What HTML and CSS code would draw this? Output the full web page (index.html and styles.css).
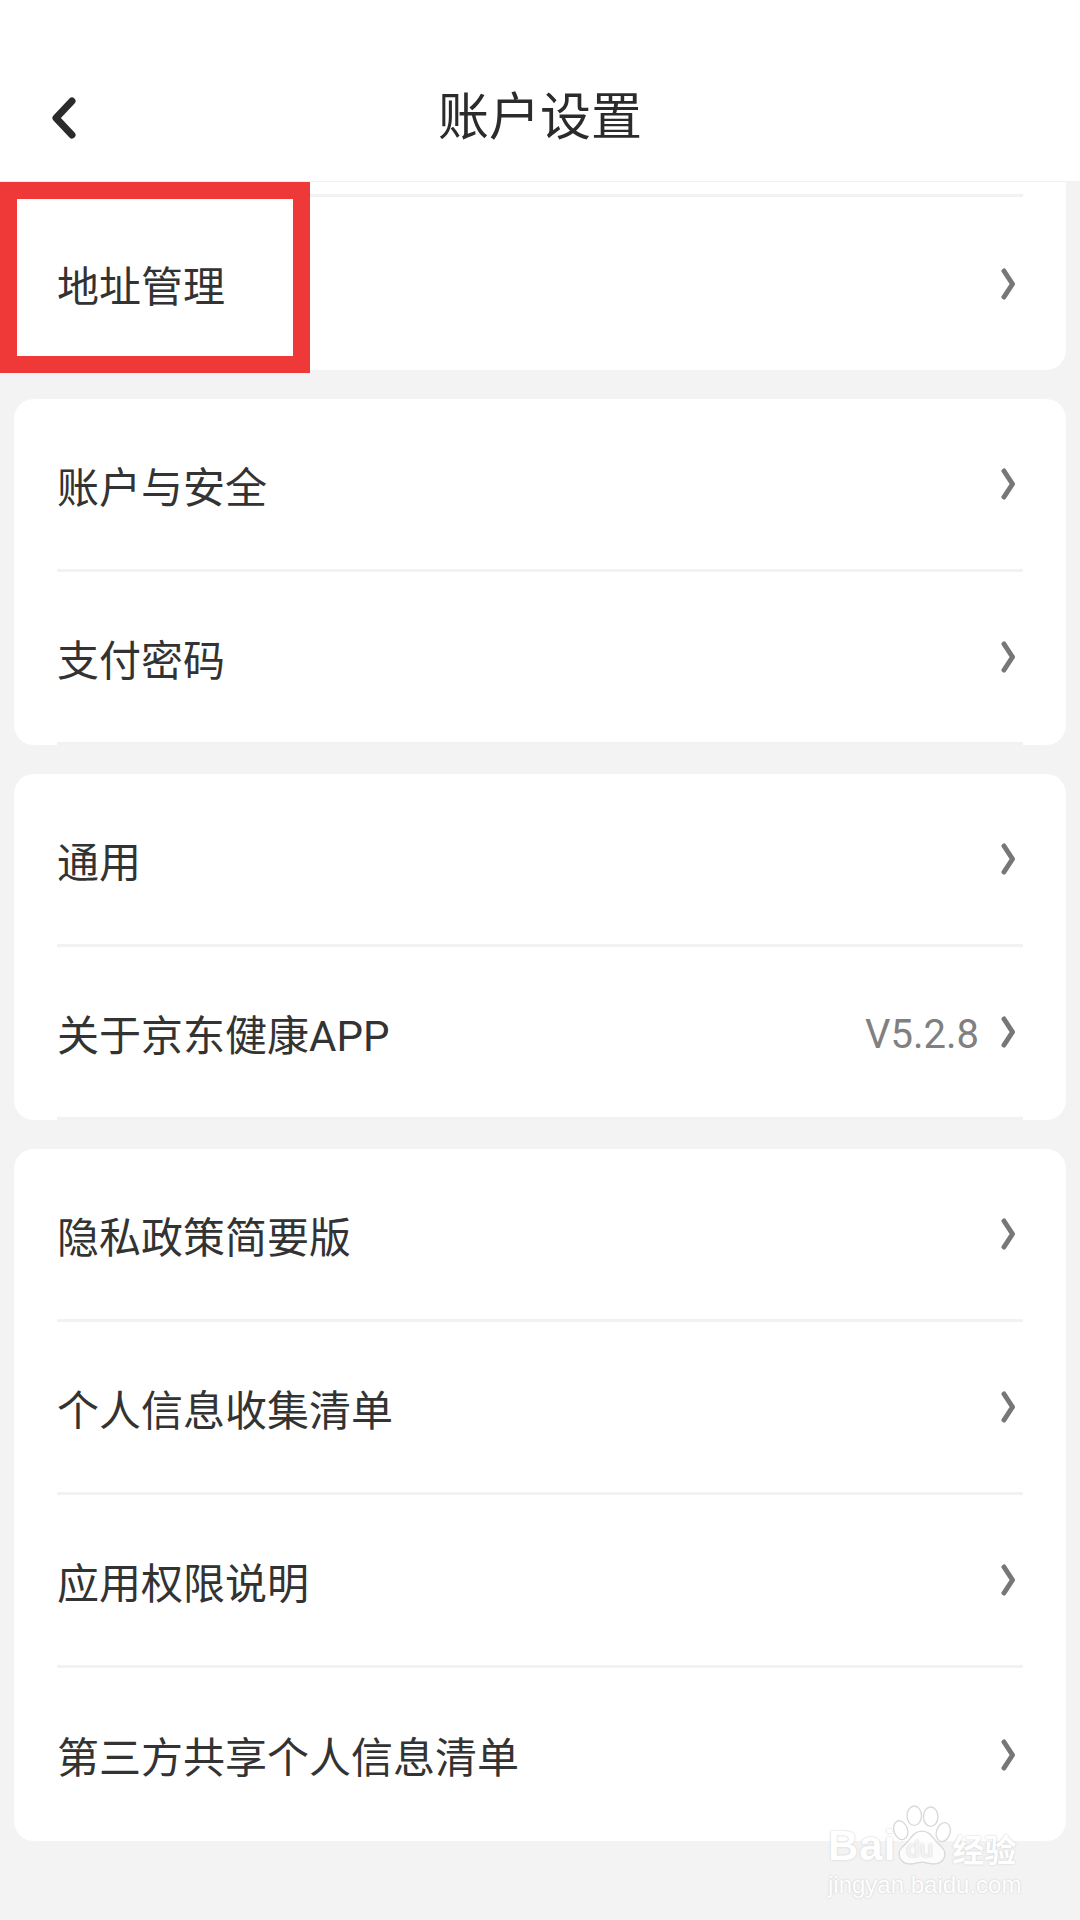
FILE: index.html
```html
<!DOCTYPE html>
<html lang="zh-CN">
<head>
    <meta charset="UTF-8">
    <meta name="viewport" content="width=device-width, initial-scale=1.0">
    <title>账户设置</title>
    <link rel="stylesheet" href="styles.css">
</head>
<body>
    <header class="top-bar">
        <svg class="back" viewBox="0 0 26 42" width="26" height="42">
            <path d="M21 4 L5 21 L21 38" fill="none" stroke="#2b2b2b" stroke-width="7" stroke-linecap="round" stroke-linejoin="round"/>
        </svg>
        <h1 class="title">账户设置</h1>
    </header>

    <main class="list">
        <section class="card card-first">
            <div class="row"><span class="label">地址管理</span><svg class="arrow" viewBox="0 0 15 32"><path d="M3 3 L11.5 16 L3 29" fill="none" stroke="#777777" stroke-width="5" stroke-linecap="round" stroke-linejoin="round"/></svg></div>
        </section>

        <section class="card">
            <div class="row"><span class="label">账户与安全</span><svg class="arrow" viewBox="0 0 15 32"><path d="M3 3 L11.5 16 L3 29" fill="none" stroke="#777777" stroke-width="5" stroke-linecap="round" stroke-linejoin="round"/></svg></div>
            <div class="row"><span class="label">支付密码</span><svg class="arrow" viewBox="0 0 15 32"><path d="M3 3 L11.5 16 L3 29" fill="none" stroke="#777777" stroke-width="5" stroke-linecap="round" stroke-linejoin="round"/></svg></div>
        </section>

        <section class="card">
            <div class="row"><span class="label">通用</span><svg class="arrow" viewBox="0 0 15 32"><path d="M3 3 L11.5 16 L3 29" fill="none" stroke="#777777" stroke-width="5" stroke-linecap="round" stroke-linejoin="round"/></svg></div>
            <div class="row"><span class="label">关于京东健康APP</span><span class="version">V5.2.8</span><svg class="arrow" viewBox="0 0 15 32"><path d="M3 3 L11.5 16 L3 29" fill="none" stroke="#777777" stroke-width="5" stroke-linecap="round" stroke-linejoin="round"/></svg></div>
        </section>

        <section class="card card-last">
            <div class="row"><span class="label">隐私政策简要版</span><svg class="arrow" viewBox="0 0 15 32"><path d="M3 3 L11.5 16 L3 29" fill="none" stroke="#777777" stroke-width="5" stroke-linecap="round" stroke-linejoin="round"/></svg></div>
            <div class="row"><span class="label">个人信息收集清单</span><svg class="arrow" viewBox="0 0 15 32"><path d="M3 3 L11.5 16 L3 29" fill="none" stroke="#777777" stroke-width="5" stroke-linecap="round" stroke-linejoin="round"/></svg></div>
            <div class="row"><span class="label">应用权限说明</span><svg class="arrow" viewBox="0 0 15 32"><path d="M3 3 L11.5 16 L3 29" fill="none" stroke="#777777" stroke-width="5" stroke-linecap="round" stroke-linejoin="round"/></svg></div>
            <div class="row"><span class="label">第三方共享个人信息清单</span><svg class="arrow" viewBox="0 0 15 32"><path d="M3 3 L11.5 16 L3 29" fill="none" stroke="#777777" stroke-width="5" stroke-linecap="round" stroke-linejoin="round"/></svg></div>
        </section>
    </main>

    <!-- red highlight over the first row -->
    <div class="highlight"></div>

    <!-- watermark -->
    <div class="watermark">
        <div class="wm-top">
            <span class="wm-bai">Bai</span>
            <span class="wm-paw">
                <svg viewBox="0 0 60 62" width="60" height="62">
                    <g fill="#ffffff" fill-opacity="0.75" stroke="#d9d9d9" stroke-width="1.4">
                        <ellipse cx="8" cy="25" rx="7" ry="10" transform="rotate(-18 8 25)"/>
                        <ellipse cx="22" cy="10" rx="7.5" ry="10"/>
                        <ellipse cx="39" cy="11" rx="7.5" ry="10"/>
                        <ellipse cx="52" cy="27" rx="7" ry="10" transform="rotate(18 52 27)"/>
                        <path d="M30 26 C40 26 42 36 50 42 C58 50 52 60 42 60 C36 60 34 58 30 58 C26 58 24 60 18 60 C8 60 2 50 10 42 C18 36 20 26 30 26 Z"/>
                    </g>
                </svg>
                <span class="wm-du">du</span>
            </span>
            <span class="wm-cn">经验</span>
        </div>
        <div class="wm-url">jingyan.baidu.com</div>
    </div>
</body>
</html>
```

FILE: styles.css
```css
* {
    box-sizing: border-box;
}
body {
    position: relative;
    margin: 0;
    height: 1920px;
    overflow: hidden;
    background-color: #f3f3f3;
    font-family: Roboto, "Noto Sans CJK SC", sans-serif;
    color: #333333;
}
.top-bar {
    position: relative;
    height: 182px;
    padding-top: 44px;
    background-color: #ffffff;
    border-bottom: 1px solid #f2f2f2;
    display: flex;
    align-items: center;
    justify-content: center;
}
.back {
    position: absolute;
    left: 51px;
    top: 97px;
}
.title {
    margin: 0;
    font-size: 51px;
    font-weight: 400;
    color: #2b2b2b;
}
.list {
    padding: 0 14px;
    display: flex;
    flex-direction: column;
    gap: 29px;
}
.card {
    background-color: #ffffff;
    border-radius: 20px;
    padding: 0 43px;
}
.card-first {
    height: 188px;
    border-radius: 0 0 20px 20px;
    padding-top: 12px;
}
.card-first .row {
    height: 176px;
    border-top: 3px solid #f2f2f2;
    border-bottom: none;
}
.row {
    height: 173px;
    display: flex;
    align-items: center;
    border-bottom: 3px solid #f2f2f2;
}
.card-last .row:last-child {
    border-bottom: none;
}
.label {
    flex: 1;
    font-size: 42px;
    color: #333333;
}
.version {
    margin-right: 22px;
    padding-top: 4px;
    font-family: Roboto, "Liberation Sans", sans-serif;
    font-size: 40px;
    color: #808080;
}
.arrow {
    width: 15px;
    height: 32px;
    margin-right: 7px;
    flex-shrink: 0;
}
.highlight {
    position: absolute;
    left: 0;
    top: 182px;
    width: 310px;
    height: 191px;
    border: 17px solid #ef3939;
}
.watermark {
    position: absolute;
    left: 828px;
    top: 1805px;
    width: 196px;
    color: #ffffff;
    font-family: "Liberation Sans", sans-serif;
    text-shadow: 0 0 2px #c4c4c4;
}
.wm-top {
    display: flex;
    align-items: flex-end;
    height: 62px;
}
.wm-bai {
    font-size: 42px;
    line-height: 42px;
    font-weight: 700;
    letter-spacing: 1px;
}
.wm-paw {
    position: relative;
    width: 58px;
    height: 62px;
    margin-left: -3px;
    flex-shrink: 0;
}
.wm-paw svg {
    width: 58px;
}
.wm-du {
    position: absolute;
    left: 13px;
    bottom: 6px;
    font-size: 24px;
    line-height: 24px;
    color: #f5f5f5;
}
.wm-cn {
    font-family: "Noto Sans CJK SC", sans-serif;
    font-size: 32px;
    line-height: 38px;
    font-weight: 700;
    white-space: nowrap;
    margin-left: 1px;
}
.wm-url {
    margin-top: 3px;
    font-size: 24px;
    line-height: 30px;
    white-space: nowrap;
}
```
